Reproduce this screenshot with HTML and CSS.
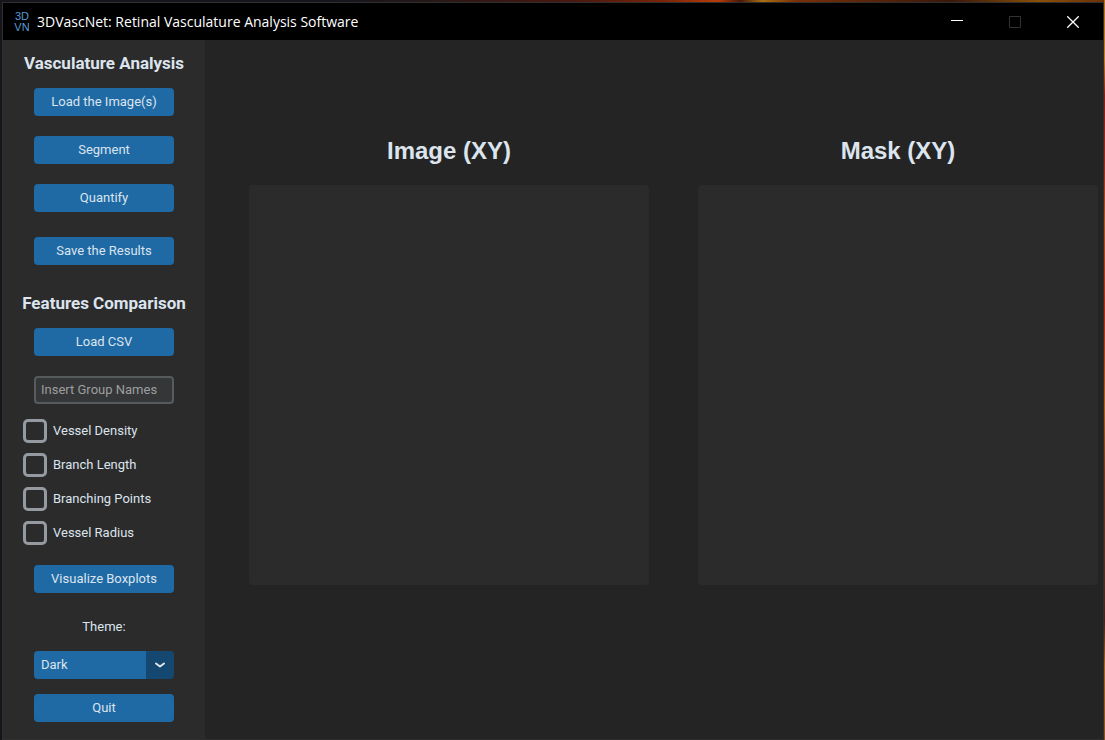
FILE: index.html
```html
<!DOCTYPE html>
<html lang="en">
<head>
<meta charset="utf-8">
<meta name="viewport" content="width=device-width, initial-scale=1">
<title>3DVascNet: Retinal Vasculature Analysis Software</title>
<link rel="stylesheet" href="styles.css">
</head>
<body>
<div class="window">
  <header class="titlebar">
    <svg class="logo" viewBox="0 0 20 20" aria-hidden="true">
      <text x="10" y="8" text-anchor="middle">3D</text>
      <text x="10" y="19" text-anchor="middle">VN</text>
    </svg>
    <span class="title">3DVascNet: Retinal Vasculature Analysis Software</span>
    <div class="controls">
      <button class="control" type="button" aria-label="Minimize"><svg viewBox="0 0 12 12"><path d="M0 4.5H12"/></svg></button>
      <button class="control" type="button" aria-label="Maximize" disabled><svg viewBox="0 0 12 12"><path d="M.5 .5H11.5V11.5H.5Z"/></svg></button>
      <button class="control" type="button" aria-label="Close"><svg viewBox="0 0 12 12"><path class="cross" d="M.3 .3L11.7 11.7M11.7 .3L.3 11.7"/></svg></button>
    </div>
  </header>
  <div class="content">
    <aside class="sidebar">
      <section class="group">
        <h2 class="heading">Vasculature Analysis</h2>
        <div class="stack">
          <button class="button" type="button">Load the Image(s)</button>
          <button class="button" type="button">Segment</button>
          <button class="button" type="button">Quantify</button>
        </div>
        <button class="button save" type="button">Save the Results</button>
      </section>
      <section class="group">
        <h2 class="heading">Features Comparison</h2>
        <div class="stack">
          <button class="button" type="button">Load CSV</button>
          <input class="entry" type="text" placeholder="Insert Group Names" aria-label="Group names">
        </div>
        <div class="checks">
          <label class="check"><input class="box" type="checkbox">Vessel Density</label>
          <label class="check"><input class="box" type="checkbox">Branch Length</label>
          <label class="check"><input class="box" type="checkbox">Branching Points</label>
          <label class="check"><input class="box" type="checkbox">Vessel Radius</label>
        </div>
        <button class="button" type="button">Visualize Boxplots</button>
      </section>
      <section class="theme">
        <label class="theme-label" for="theme">Theme:</label>
        <div class="dropdown">
          <select class="select" id="theme">
            <option>Dark</option>
            <option>Light</option>
            <option>System</option>
          </select>
          <svg class="chevron" viewBox="0 0 10 6" aria-hidden="true"><path d="M1 1.5L5 4.5L9 1.5"/></svg>
        </div>
        <button class="button" type="button">Quit</button>
      </section>
    </aside>
    <main class="views">
      <section class="view">
        <h1 class="view-title">Image (XY)</h1>
        <div class="canvas"></div>
      </section>
      <section class="view">
        <h1 class="view-title">Mask (XY)</h1>
        <div class="canvas"></div>
      </section>
    </main>
  </div>
</div>
</body>
</html>
```
FILE: styles.css
```css
* {
  box-sizing: border-box;
}

body {
  display: flex;
  min-height: 100vh;
  margin: 0;
  padding: 2px 1px 0 2px;
  background:
    linear-gradient(#b87010, #c07818 8%, #8a1c10 13%, #a02818 22%, #b05018 30%, #b82810 42%, #b05c14 55%, #7a3418 64%, #5a2c20 76%, #4a2018 84%, #a86018 90%, #8a5018) right / 1px 100% no-repeat,
    linear-gradient(90deg, #15151c, #15151c 30%, #241818 38%, #4a1810 52%, #7a2408 60%, #b83c08 65%, #4a1808 67%, #a87010 69%, #7a3008 72%, #38180c 86%, #8a5008 94%, #6c3008);
  color: #dce4ee;
  font: 13px/16px Roboto, "Liberation Sans", sans-serif;
}

.window {
  display: flex;
  flex: 1;
  flex-direction: column;
  border: 1px solid #302f30;
  background: #242424;
}

.titlebar {
  display: flex;
  align-items: center;
  height: 37px;
  padding-left: 9px;
  background: #000;
  color: #fff;
}

.logo {
  width: 20px;
  height: 20px;
  margin-right: 5px;
  overflow: visible;
  fill: #5a9cd4;
  font: 11px "Liberation Sans", sans-serif;
}

.title {
  font: 14px/20px "Open Sans", "Noto Sans", sans-serif;
}

.controls {
  display: flex;
  align-self: stretch;
  margin-left: auto;
  padding-right: 1px;
}

.control {
  display: grid;
  place-items: center;
  width: 58px;
  padding: 0;
  border: 0;
  background: none;
  color: #fff;
}

.control:disabled {
  color: #333;
}

.control svg {
  width: 12px;
  height: 12px;
  fill: none;
  stroke: currentColor;
}

.control .cross {
  stroke-width: 1.3;
}

.content {
  display: flex;
  flex: 1;
}

.sidebar {
  display: flex;
  flex: none;
  flex-direction: column;
  width: 202px;
  padding: 13px 20px 16px;
  background: #2b2b2b;
}

.group {
  display: flex;
  flex-direction: column;
  align-items: center;
  margin-bottom: 28px;
}

.heading {
  margin: 0 0 15px;
  font-size: 17px;
  font-weight: 700;
  line-height: 20px;
  white-space: nowrap;
}

.stack {
  display: flex;
  flex-direction: column;
  gap: 20px;
}

.button,
.entry,
.select {
  width: 140px;
  height: 28px;
  border: 0;
  border-radius: 4px;
  font: inherit;
}

.button {
  padding: 0;
  background: #1f6aa5;
  color: inherit;
}

.save {
  margin-top: 25px;
}

.entry {
  padding: 0 5px 1px;
  border: 2px solid #565b5e;
  background: #343638;
  color: inherit;
}

.entry::placeholder {
  color: #9e9e9e;
  opacity: 1;
}

.checks {
  display: flex;
  flex-direction: column;
  align-self: stretch;
  gap: 10px;
  margin: 15px 0 20px;
}

.check {
  display: flex;
  align-items: center;
  gap: 6px;
}

.box {
  appearance: none;
  width: 24px;
  height: 24px;
  margin: 0;
  border: 3px solid #949a9f;
  border-radius: 5px;
}

.box:checked {
  background: #1f6aa5;
}

.theme {
  display: flex;
  flex-direction: column;
  align-items: center;
}

.theme-label {
  margin: -2px 0 16px;
}

.dropdown {
  display: grid;
  align-items: center;
  margin-bottom: 15px;
}

.select {
  grid-area: 1 / 1;
  appearance: none;
  padding: 0 35px 0 7px;
  background: linear-gradient(90deg, #1f6aa5 112px, #144870 112px);
  color: inherit;
}

.chevron {
  grid-area: 1 / 1;
  justify-self: end;
  width: 10px;
  height: 6px;
  margin-right: 9px;
  fill: none;
  stroke: #dce4ee;
  stroke-width: 2;
  stroke-linecap: round;
  stroke-linejoin: round;
  pointer-events: none;
}

.views {
  display: grid;
  flex: 1;
  grid-template-columns: 1fr 1fr;
  gap: 49px;
  align-content: start;
  padding: 96px 5px 0 44px;
}

.view-title {
  margin: 0 0 19px;
  font: 700 24px/30px "Liberation Sans", Arial, sans-serif;
  text-align: center;
}

.canvas {
  aspect-ratio: 1;
  border-radius: 4px;
  background: #2b2b2b;
}
```
